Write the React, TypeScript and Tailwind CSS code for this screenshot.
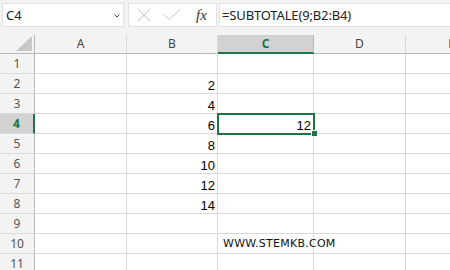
import React from "react";

const COLS = [
  { key: "A", w: "w-[92px]" },
  { key: "B", w: "w-[91px]" },
  { key: "C", w: "w-[96px]" },
  { key: "D", w: "w-[92px]" },
  { key: "E", w: "w-[92px]" },
];

const VALUES: Record<number, string> = { 2: "2", 3: "4", 4: "6", 5: "8", 6: "10", 7: "12", 8: "14" };

const ROWS = [1, 2, 3, 4, 5, 6, 7, 8, 9, 10, 11];

function Toolbar() {
  return (
    <div className="h-[35px] bg-[#f3f3f3] flex items-start pt-[3px] pl-[2px] shrink-0">
      {/* name box */}
      <div className="w-[122px] h-[24px] bg-white border border-[#e1e1e1] flex items-center justify-between pl-[3px] pr-[3px]">
        <span className="text-[13px] text-[#222] font-['Noto_Sans',sans-serif] leading-none">C4</span>
        <svg width="6" height="4" viewBox="0 0 6 4" className="mt-[2px]">
          <path d="M0.5 0.5 L3 3 L5.5 0.5" stroke="#444" strokeWidth="1" fill="none" />
        </svg>
      </div>
      {/* cancel / enter / fx */}
      <div className="ml-[4px] w-[89px] h-[24px] bg-white border border-[#e1e1e1] flex items-center">
        <svg width="14" height="14" viewBox="0 0 14 14" className="ml-[8px]">
          <path d="M1 1 L13 13 M13 1 L1 13" stroke="#c4c4c4" strokeWidth="1" fill="none" />
        </svg>
        <svg width="18" height="12" viewBox="0 0 18 12" className="ml-[12px]">
          <path d="M0.5 5 L6 10.5 L17 0.5" stroke="#c4c4c4" strokeWidth="1" fill="none" />
        </svg>
        <span className="ml-[15px] text-[15px] italic text-[#333] font-['Liberation_Serif',serif] leading-none">fx</span>
      </div>
      {/* formula */}
      <div className="ml-[2px] flex-1 h-[24px] bg-white border border-r-0 border-[#e1e1e1] flex items-center pl-[2px]">
        <span className="text-[13px] text-[#222] font-['Noto_Sans',sans-serif] leading-none tracking-[-0.15px]">=SUBTOTALE(9;B2:B4)</span>
      </div>
    </div>
  );
}

function HeaderRow() {
  return (
    <div className="flex h-[19px]">
      <div className="w-[35px] shrink-0 bg-[#f3f3f3] border-r border-b border-[#b8b8b8] flex items-end justify-end pr-[2px] pb-[2px]">
        <svg width="16" height="15" viewBox="0 0 16 15">
          <path d="M16 0 L16 15 L0 15 Z" fill="#c8c8c8" />
        </svg>
      </div>
      {COLS.map((c) =>
        c.key === "C" ? (
          <div
            key={c.key}
            className={`${c.w} shrink-0 bg-[#d2d2d2] border-r border-[#b8b8b8] border-b-2 border-b-[#217346] flex items-center justify-center text-[12px] font-bold text-[#217346] font-['Noto_Sans',sans-serif] leading-none`}
          >
            {c.key}
          </div>
        ) : (
          <div
            key={c.key}
            className={`${c.w} shrink-0 bg-[#f3f3f3] border-r border-[#d9d9d9] border-b border-b-[#b8b8b8] flex items-center justify-center text-[12px] text-[#444] font-['Noto_Sans',sans-serif] leading-none`}
          >
            {c.key}
          </div>
        )
      )}
    </div>
  );
}

function Row({ n }: { n: number }) {
  const active = n === 4;
  return (
    <div className="flex h-[20px]">
      <div
        className={
          active
            ? "w-[35px] shrink-0 bg-[#d2d2d2] border-r-2 border-r-[#217346] border-b border-[#d9d9d9] flex items-center justify-center text-[12px] font-bold text-[#217346] font-['Noto_Sans',sans-serif] leading-none"
            : "w-[35px] shrink-0 bg-[#f3f3f3] border-r border-r-[#b8b8b8] border-b border-[#d9d9d9] flex items-center justify-center text-[12px] text-[#555] font-['Noto_Sans',sans-serif] leading-none"
        }
      >
        {n}
      </div>
      {COLS.map((c) => (
        <div
          key={c.key}
          className={`${c.w} shrink-0 border-r border-b border-[#d9d9d9] flex items-end pb-[1px] text-[13px] text-black font-['Liberation_Sans',sans-serif] leading-none ${
            c.key === "B" || (c.key === "C" && n === 4) ? "justify-end pr-[2px]" : "justify-start"
          }`}
        >
          {c.key === "B" && VALUES[n]}
          {c.key === "C" && n === 4 && "12"}
          {c.key === "C" && n === 10 && (
            <span className="pl-[5px] pb-[3px] text-[11px] tracking-[0.25px] text-[#111] font-['DejaVu_Sans',sans-serif]">WWW.STEMKB.COM</span>
          )}
        </div>
      ))}
    </div>
  );
}

export default function App() {
  return (
    <div className="w-[450px] h-[270px] overflow-hidden bg-white relative flex flex-col">
      <Toolbar />
      <div className="flex flex-col">
        <HeaderRow />
        {ROWS.map((n) => (
          <Row key={n} n={n} />
        ))}
      </div>
      {/* active cell selection */}
      <div className="absolute left-[217px] top-[113px] w-[98px] h-[22px] border-2 border-[#217346]" />
      <div className="absolute left-[311px] top-[130px] w-[6px] h-[6px] bg-[#217346] border-l border-t border-white" />
    </div>
  );
}
